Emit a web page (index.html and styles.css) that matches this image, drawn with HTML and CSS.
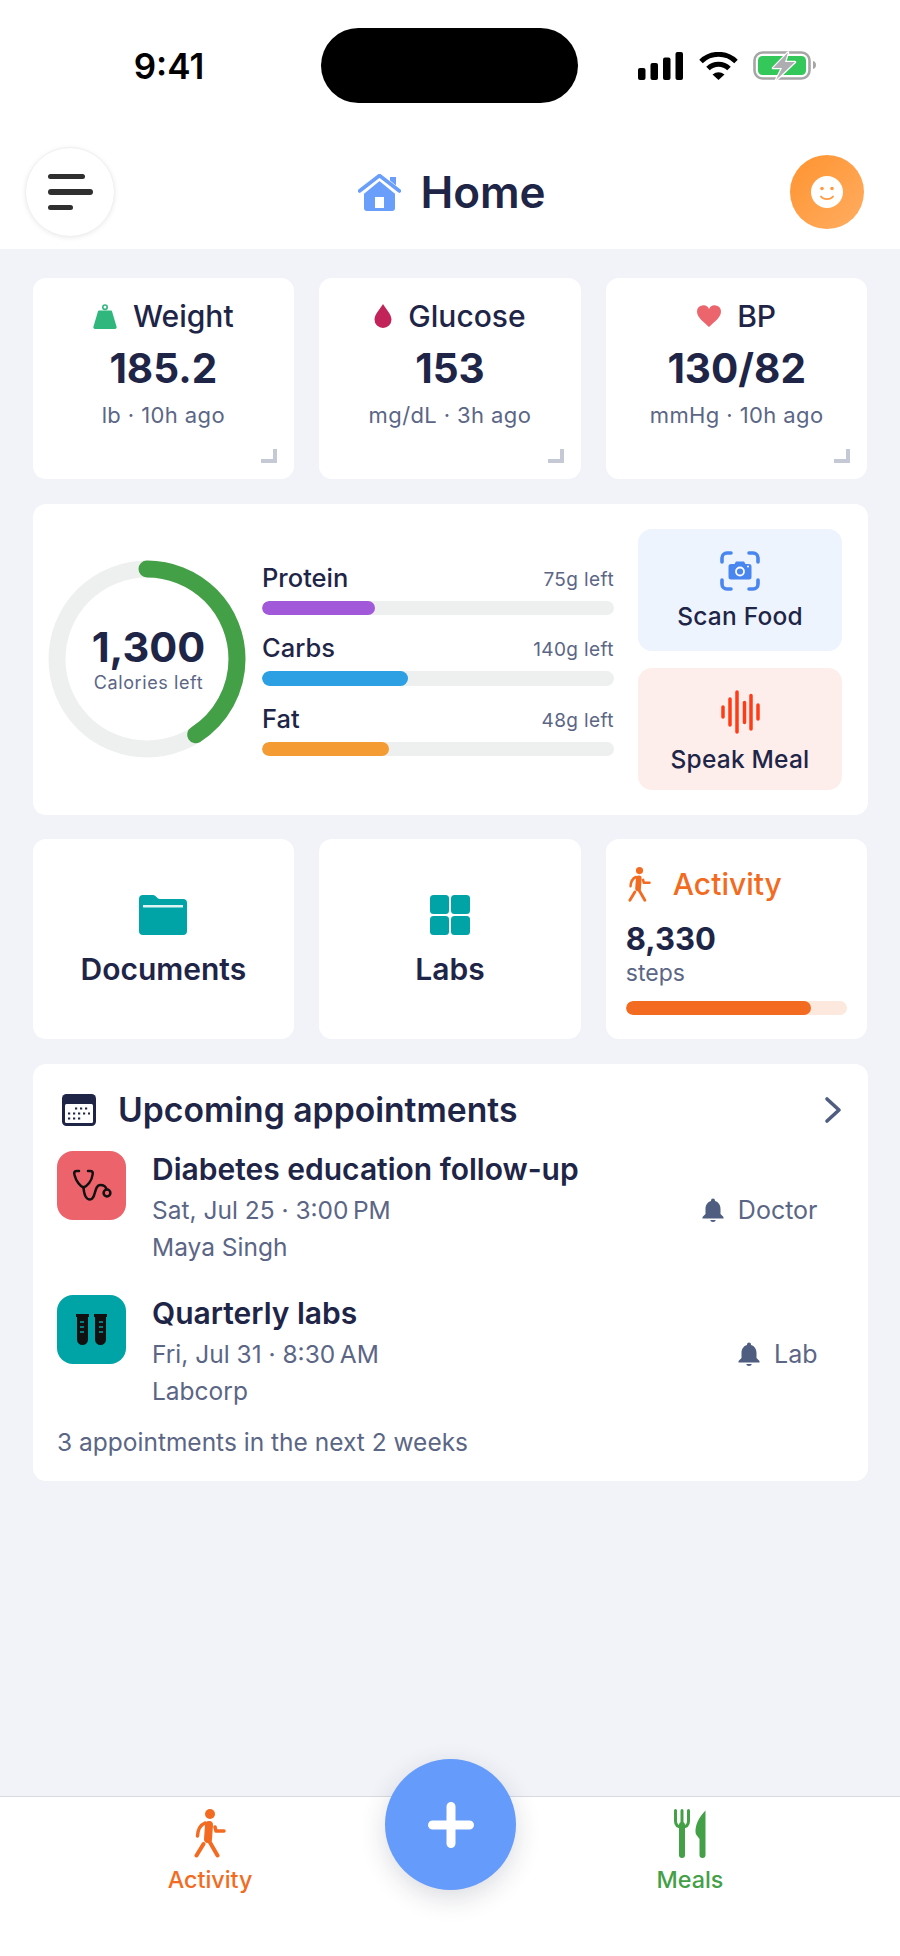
FILE: index.html
```html
<!DOCTYPE html>
<html lang="en">
<head>
    <meta charset="UTF-8">
    <meta name="viewport" content="width=device-width, initial-scale=1.0">
    <title>Home</title>
    <link rel="stylesheet" href="styles.css">
</head>
<body>
<div class="page">
    <div class="top">
        <div class="status">
            <span class="time">9:41</span>
            <div class="island"></div>
            <div class="status-icons">
                <svg class="signal" width="46" height="28" viewBox="0 0 46 28">
                    <rect x="0" y="16" width="7.5" height="12" rx="2"/>
                    <rect x="12.5" y="11" width="7.5" height="17" rx="2"/>
                    <rect x="25" y="5.5" width="7.5" height="22.5" rx="2"/>
                    <rect x="37.5" y="0" width="7.5" height="28" rx="2"/>
                </svg>
                <svg class="wifi" width="39" height="28" viewBox="0 0 39 28">
                    <path d="M2 9.5A25 25 0 0 1 37 9.5M9 16.5A15 15 0 0 1 30 16.5" fill="none" stroke="#000" stroke-width="5"/>
                    <path d="M13.5 22.5Q19.5 18 25.5 22.5L19.5 28Z"/>
                </svg>
                <svg class="battery" width="64" height="30" viewBox="0 0 64 30">
                    <rect x="1.5" y="1.5" width="55" height="26" rx="8" fill="none" stroke="#a6a6a6" stroke-width="2.6"/>
                    <rect x="5" y="5" width="48" height="19" rx="4.5" fill="#34c759"/>
                    <path d="M60 10c2 .5 3 2 3 4s-1 3.500-3 4z" fill="#a6a6a6"/>
                    <path d="M35 1.500L20 17H29L23 29L42 11H32Z" fill="#aeaeb2" stroke="#fff" stroke-width="2.500" stroke-linejoin="round" paint-order="stroke"/>
                </svg>
            </div>
        </div>
        <div class="topbar">
            <button class="menu-btn">
                <span class="line line-a"></span>
                <span class="line line-b"></span>
                <span class="line line-c"></span>
            </button>
            <h1 class="page-title">
                <svg width="43" height="37" viewBox="0 0 43 37">
                    <path d="M6 13.500L21.500 2 37 13.500V34a3 3 0 0 1-3 3H9a3 3 0 0 1-3-3Z" fill="#6a9efb"/>
                    <rect x="32" y="3" width="6" height="11" fill="#6a9efb"/>
                    <path d="M2 18.500L21.500 2.500 41 18.500" fill="none" stroke="#fff" stroke-width="7"/>
                    <path d="M1.500 17L21.500 1.500 41.500 17" fill="none" stroke="#6a9efb" stroke-width="3.600" stroke-linecap="round"/>
                    <rect x="17" y="23" width="9" height="11" fill="#fff"/>
                </svg>
                Home
            </h1>
            <div class="avatar">
                <svg width="32" height="32" viewBox="0 0 32 32">
                    <circle cx="16" cy="16" r="16" fill="#fff"/>
                    <circle cx="11" cy="12.500" r="1.800" fill="#ff9a3f"/>
                    <circle cx="21" cy="12.500" r="1.800" fill="#ff9a3f"/>
                    <path d="M10 20.500C12.500 24 19.500 24 22 20.500" fill="none" stroke="#ff9a3f" stroke-width="1.800" stroke-linecap="round"/>
                </svg>
            </div>
        </div>
    </div>

    <main class="content">
        <section class="row-3 stats">
            <div class="card stat">
                <div class="stat-label">
                    <svg width="24" height="25" viewBox="0 0 24 25">
                        <circle cx="12" cy="3.200" r="2.200" fill="none" stroke="#2fb77e" stroke-width="1.600"/>
                        <path d="M6 6.500H18a1 1 0 0 1 1 .8L23.500 22.500a1.800 1.800 0 0 1-1.700 2.500H2.200a1.800 1.800 0 0 1-1.700-2.500L5 7.300a1 1 0 0 1 1-.8Z" fill="#2fb77e"/>
                    </svg>
                    Weight
                </div>
                <div class="stat-value">185.2</div>
                <div class="stat-sub">lb · 10h ago</div>
                <span class="corner"></span>
            </div>
            <div class="card stat">
                <div class="stat-label">
                    <svg width="18" height="24" viewBox="0 0 18 24">
                        <path d="M9 0C11 4 17.500 10 17.500 15.500A8.500 8.500 0 0 1 .5 15.500C.5 10 7 4 9 0Z" fill="#c2245a"/>
                    </svg>
                    Glucose
                </div>
                <div class="stat-value">153</div>
                <div class="stat-sub">mg/dL · 3h ago</div>
                <span class="corner"></span>
            </div>
            <div class="card stat">
                <div class="stat-label">
                    <svg width="24" height="22" viewBox="0 0 24 22">
                        <path d="M12 22C7 17 0 12.500 0 6.500A6.300 6.300 0 0 1 12 4A6.300 6.300 0 0 1 24 6.500C24 12.500 17 17 12 22Z" fill="#ec646c"/>
                    </svg>
                    BP
                </div>
                <div class="stat-value">130/82</div>
                <div class="stat-sub">mmHg · 10h ago</div>
                <span class="corner"></span>
            </div>
        </section>

        <section class="card macros">
            <div class="ring">
                <svg width="198" height="198" viewBox="0 0 198 198">
                    <circle cx="99" cy="99" r="90" fill="none" stroke="#eef0f0" stroke-width="17"/>
                    <circle cx="99" cy="99" r="90" fill="none" stroke="#43a047" stroke-width="17" stroke-linecap="round" stroke-dasharray="231 565" transform="rotate(-90 99 99)"/>
                </svg>
                <div class="ring-text">
                    <div class="ring-value">1,300</div>
                    <div class="ring-sub">Calories left</div>
                </div>
            </div>
            <div class="macro-list">
                <div class="macro">
                    <div class="macro-head"><span class="macro-name">Protein</span><span class="macro-left">75g left</span></div>
                    <div class="bar"><div class="bar-fill fill-protein" style="width: 32%"></div></div>
                </div>
                <div class="macro">
                    <div class="macro-head"><span class="macro-name">Carbs</span><span class="macro-left">140g left</span></div>
                    <div class="bar"><div class="bar-fill fill-carbs" style="width: 41.500%"></div></div>
                </div>
                <div class="macro">
                    <div class="macro-head"><span class="macro-name">Fat</span><span class="macro-left">48g left</span></div>
                    <div class="bar"><div class="bar-fill fill-fat" style="width: 36%"></div></div>
                </div>
            </div>
            <div class="actions">
                <div class="action action-scan">
                    <svg width="40" height="40" viewBox="0 0 40 40">
                        <path d="M2 11V7a5 5 0 0 1 5-5H11M29 2H33a5 5 0 0 1 5 5V11M38 29V33a5 5 0 0 1-5 5H29M11 38H7a5 5 0 0 1-5-5V29" fill="none" stroke="#4a86f0" stroke-width="3.600" stroke-linecap="round"/>
                        <path d="M11 13H14.500L16 10.500H24L25.500 13H29a2.500 2.500 0 0 1 2.500 2.500V26a2.500 2.500 0 0 1-2.500 2.500H11A2.500 2.500 0 0 1 8.500 26V15.500A2.500 2.500 0 0 1 11 13Z" fill="#4a86f0"/>
                        <circle cx="20" cy="20.500" r="4" fill="none" stroke="#fff" stroke-width="1.800"/>
                        <circle cx="28" cy="15.500" r="1" fill="#fff"/>
                    </svg>
                    <span>Scan Food</span>
                </div>
                <div class="action action-speak">
                    <svg width="40" height="44" viewBox="0 0 40 44" stroke="#ff3c17" stroke-width="3.500" stroke-linecap="round">
                        <path d="M3 17V27M10 9V35M17 2V42M24.500 12.500V32.500M31 5.500V39M38 15V29"/>
                    </svg>
                    <span>Speak Meal</span>
                </div>
            </div>
        </section>

        <section class="row-3 links">
            <div class="card link">
                <svg width="48" height="40" viewBox="0 0 48 40">
                    <path d="M4 0H14C17 0 18 4 21 4H44a4 4 0 0 1 4 4V36a4 4 0 0 1-4 4H4a4 4 0 0 1-4-4V4a4 4 0 0 1 4-4Z" fill="#00a3a6"/>
                    <rect x="4" y="10" width="40" height="2.500" fill="#dff3f3"/>
                </svg>
                <span>Documents</span>
            </div>
            <div class="card link">
                <svg width="40" height="40" viewBox="0 0 40 40" fill="#00a3a6">
                    <rect width="19" height="19" rx="3.500"/>
                    <rect x="21" width="19" height="19" rx="3.500"/>
                    <rect y="21" width="19" height="19" rx="3.500"/>
                    <rect x="21" y="21" width="19" height="19" rx="3.500"/>
                </svg>
                <span>Labs</span>
            </div>
            <div class="card activity">
                <div class="activity-head">
                    <svg width="23" height="35" viewBox="0 0 32 49">
                        <circle cx="16" cy="5" r="5" fill="#f26b21"/>
                        <path d="M15 16L14 30" stroke="#f26b21" stroke-width="8" stroke-linecap="round"/>
                        <path d="M11 14Q4 17 3.500 27M21 18L22 22H30" fill="none" stroke="#f26b21" stroke-width="3.500" stroke-linecap="round" stroke-linejoin="round"/>
                        <path d="M14 30L23.500 46.500M9.500 35L2.500 46.500" fill="none" stroke="#f26b21" stroke-width="4" stroke-linecap="round"/>
                    </svg>
                    Activity
                </div>
                <div class="activity-value">8,330</div>
                <div class="activity-sub">steps</div>
                <div class="activity-bar"><div class="activity-fill" style="width: 83.500%"></div></div>
            </div>
        </section>

        <section class="card appts">
            <div class="appts-head">
                <svg width="34" height="32" viewBox="0 0 34 32">
                    <rect width="34" height="32" rx="4.500" fill="#1e2547"/>
                    <rect x="3" y="10" width="28" height="19" rx="1.500" fill="#fff"/>
                    <path d="M13 14.500H28M6 19.500H28M6 24.500H21" stroke="#1e2547" stroke-width="2.200" stroke-dasharray="2.200 2.800"/>
                </svg>
                <h2>Upcoming appointments</h2>
                <svg class="chevron" width="18" height="28" viewBox="0 0 18 28">
                    <path d="M3 3L15 14L3 25" fill="none" stroke="#4f5d80" stroke-width="3.600" stroke-linecap="round" stroke-linejoin="round"/>
                </svg>
            </div>
            <div class="appt">
                <div class="tile tile-doctor">
                    <svg width="40" height="33" viewBox="-1 0 40 33">
                        <path d="M6 2H3.500C1 2 1 4 1.500 6C3 12 7 17 10.500 18.500C14 17 19 12 19.500 6C20 4 20 2 17.500 2H15" fill="none" stroke="#111" stroke-width="2.500" stroke-linecap="round" stroke-linejoin="round"/>
                        <path d="M10.500 18.500C11 25 13 30.500 17 30.500C23 30.500 21 16 27 16C31 16 33 17 33.500 20.500" fill="none" stroke="#111" stroke-width="2.500"/>
                        <circle cx="34" cy="24" r="3.400" fill="none" stroke="#111" stroke-width="2.500"/>
                    </svg>
                </div>
                <div class="appt-body">
                    <div class="appt-title">Diabetes education follow-up</div>
                    <div class="appt-line">Sat, Jul 25 · 3:00&#8201;PM</div>
                    <div class="appt-line">Maya Singh</div>
                </div>
                <div class="appt-tag">
                    <svg width="24" height="24" viewBox="0 0 24 24"><path d="M12 24c1.500 0 2.700-1 2.700-2h-5.400c0 1 1.200 2 2.700 2zm7.500-8V11c0-4-2-7-5.500-8V2.500a2 2 0 0 0-4 0V3C6.500 4 4.500 7 4.500 11v5L1.500 19v1.500h21V19z" fill="#4f5d80"/></svg>
                    Doctor
                </div>
            </div>
            <div class="appt">
                <div class="tile tile-lab">
                    <svg width="31" height="31" viewBox="0 0 31 31">
                        <path d="M0 0H13V3H12V25.500a5.500 5.500 0 0 1-11 0V3H0Z" fill="#111"/>
                        <path d="M18 0H31V3H30V25.500a5.500 5.500 0 0 1-11 0V3H18Z" fill="#111"/>
                        <path d="M4 8H8M4 13H8M4 18H8M23 8H27M23 13H27M23 18H27" stroke="#00a3a6" stroke-width="1.500"/>
                    </svg>
                </div>
                <div class="appt-body">
                    <div class="appt-title">Quarterly labs</div>
                    <div class="appt-line">Fri, Jul 31 · 8:30&#8201;AM</div>
                    <div class="appt-line">Labcorp</div>
                </div>
                <div class="appt-tag">
                    <svg width="24" height="24" viewBox="0 0 24 24"><path d="M12 24c1.500 0 2.700-1 2.700-2h-5.400c0 1 1.200 2 2.700 2zm7.500-8V11c0-4-2-7-5.500-8V2.500a2 2 0 0 0-4 0V3C6.500 4 4.500 7 4.500 11v5L1.500 19v1.500h21V19z" fill="#4f5d80"/></svg>
                    Lab
                </div>
            </div>
            <div class="appts-foot">3 appointments in the next 2 weeks</div>
        </section>
    </main>

    <nav class="bottom-nav">
        <div class="nav-item nav-activity">
            <svg width="32" height="49" viewBox="0 0 32 49">
                <circle cx="16" cy="5" r="5" fill="#f26b21"/>
                <path d="M15 16L14 30" stroke="#f26b21" stroke-width="8" stroke-linecap="round"/>
                <path d="M11 14Q4 17 3.500 27M21 18L22 22H30" fill="none" stroke="#f26b21" stroke-width="3.500" stroke-linecap="round" stroke-linejoin="round"/>
                <path d="M14 30L23.500 46.500M9.500 35L2.500 46.500" fill="none" stroke="#f26b21" stroke-width="4" stroke-linecap="round"/>
            </svg>
            <span>Activity</span>
        </div>
        <div class="nav-item nav-meals">
            <svg width="32" height="49" viewBox="0 0 32 49">
                <path d="M1.500 1.500V12C1.500 16 4 18 8 18S14.500 16 14.500 12V1.500M8 1.500V18" fill="none" stroke="#43a047" stroke-width="3" stroke-linecap="round"/>
                <path d="M8 16V46" stroke="#43a047" stroke-width="6" stroke-linecap="round"/>
                <path d="M31.500 1.500V46a3 3 0 0 1-6 0V30L22.500 26C20.500 23 21 12 31.500 1.500Z" fill="#43a047"/>
            </svg>
            <span>Meals</span>
        </div>
        <button class="fab">
            <svg width="46" height="46" viewBox="0 0 46 46">
                <path d="M23 4.500V41.500M4.500 23H41.500" stroke="#fff" stroke-width="9" stroke-linecap="round"/>
            </svg>
        </button>
    </nav>
</div>
</body>
</html>
```

FILE: styles.css
```css
* {
    box-sizing: border-box;
}
body {
    margin: 0;
    font-family: Inter, "Liberation Sans", sans-serif;
    color: #1e2547;
    background: #f1f3f8;
}
svg {
    display: block;
    flex-shrink: 0;
}
.page {
    width: 900px;
    height: 1956px;
    display: flex;
    flex-direction: column;
    overflow: hidden;
}

/* top area */
.top {
    background: #fff;
    height: 249px;
}
.status {
    display: grid;
    grid-template-columns: 321px 257px 1fr;
    align-items: center;
    padding-top: 28px;
    height: 103px;
}
.time {
    font-size: 35px;
    font-weight: 600;
    color: #000;
    text-align: center;
    padding-left: 17px;
}
.island {
    height: 75px;
    background: #000;
    border-radius: 38px;
}
.status-icons {
    display: flex;
    align-items: center;
    padding-left: 60px;
}
.wifi {
    margin-left: 15px;
}
.battery {
    margin-left: 15px;
}
.topbar {
    display: grid;
    grid-template-columns: 1fr auto 1fr;
    align-items: center;
    padding: 44px 19px 0 25px;
}
.menu-btn {
    width: 90px;
    height: 90px;
    padding: 0 0 0 22px;
    border: 1px solid #f0f0f0;
    border-radius: 50%;
    background: #fff;
    box-shadow: 0 1px 5px rgba(0, 0, 0, 0.08);
    display: flex;
    flex-direction: column;
    justify-content: center;
    gap: 10px;
}
.line {
    display: block;
    height: 5.500px;
    background: #2f2f2f;
    border-radius: 3px;
}
.line-a {
    width: 37px;
}
.line-b {
    width: 45px;
}
.line-c {
    width: 25px;
}
.page-title {
    margin: 0 2px 0 0;
    display: flex;
    align-items: center;
    gap: 19px;
    font-size: 44px;
    line-height: 54px;
    font-weight: 600;
}
.avatar {
    justify-self: end;
    margin-right: 17px;
    width: 74px;
    height: 74px;
    border-radius: 50%;
    background: linear-gradient(135deg, #ff932f, #ffad62);
    display: flex;
    align-items: center;
    justify-content: center;
}

/* content */
.content {
    flex: 1;
    padding: 29px 32.500px 0;
    display: flex;
    flex-direction: column;
    gap: 24.500px;
}
.card {
    background: #fff;
    border-radius: 13px;
}
.row-3 {
    display: grid;
    grid-template-columns: repeat(3, 1fr);
    gap: 25px;
}
.stat {
    position: relative;
    height: 201px;
    padding-top: 20px;
    text-align: center;
}
.stat-label {
    display: flex;
    align-items: center;
    justify-content: center;
    gap: 16px;
    height: 36px;
    font-size: 30px;
    font-weight: 500;
}
.stat-value {
    margin-top: 11px;
    font-size: 40.500px;
    line-height: 48px;
    font-weight: 700;
}
.stat-sub {
    margin-top: 7px;
    font-size: 22px;
    letter-spacing: 0.4px;
    line-height: 30px;
    color: #5b6685;
}
.corner {
    position: absolute;
    right: 17px;
    bottom: 16px;
    width: 16px;
    height: 14px;
    border-right: 4px solid #c5c9d6;
    border-bottom: 4px solid #c5c9d6;
}

/* macros */
.macros {
    height: 311px;
    display: flex;
    align-items: center;
    padding: 0 25px 0 15.500px;
}
.ring {
    position: relative;
    width: 198px;
    height: 198px;
    flex-shrink: 0;
}
.ring-text {
    position: absolute;
    inset: 0;
    padding-left: 3px;
    display: flex;
    flex-direction: column;
    align-items: center;
    justify-content: center;
}
.ring-value {
    font-size: 41.500px;
    line-height: 48px;
    font-weight: 700;
}
.ring-sub {
    font-size: 18px;
    line-height: 24px;
    letter-spacing: 0.6px;
    color: #5b6685;
}
.macro-list {
    width: 352px;
    margin: -3px 0 0 16px;
    display: flex;
    flex-direction: column;
    gap: 14px;
}
.macro-head {
    display: flex;
    justify-content: space-between;
    align-items: flex-end;
    height: 42px;
    padding-bottom: 8px;
}
.macro-name {
    font-size: 25.500px;
    line-height: 30px;
    font-weight: 500;
}
.macro-left {
    font-size: 19px;
    line-height: 26px;
    letter-spacing: 0.4px;
    color: #5b6685;
}
.bar {
    height: 14.500px;
    background: #eef0f0;
    border-radius: 8px;
    overflow: hidden;
}
.bar-fill {
    height: 100%;
    border-radius: 8px;
}
.fill-protein {
    background: #a259d9;
}
.fill-carbs {
    background: #2d9fe3;
}
.fill-fat {
    background: #f59b34;
}
.actions {
    width: 204px;
    margin-left: 24px;
    display: flex;
    flex-direction: column;
    gap: 17px;
}
.action {
    height: 122px;
    border-radius: 14px;
    display: flex;
    flex-direction: column;
    align-items: center;
    padding-top: 22px;
    font-size: 24.500px;
    font-weight: 500;
    letter-spacing: 0.2px;
}
.action span {
    margin-top: 9px;
    line-height: 32px;
}
.action-scan {
    background: #edf4fe;
}
.action-speak {
    background: #fdeeeb;
}

/* links row */
.links {
    height: 200px;
}
.link {
    display: flex;
    flex-direction: column;
    align-items: center;
    padding-top: 56px;
    font-size: 30px;
    font-weight: 600;
}
.link span {
    margin-top: 16px;
    line-height: 36px;
}
.activity {
    padding: 27px 20px 0;
}
.activity-head {
    display: flex;
    align-items: center;
    gap: 22px;
    height: 36px;
    margin-left: 2px;
    font-size: 30px;
    font-weight: 500;
    color: #f26b21;
}
.activity-value {
    margin-top: 18px;
    font-size: 31px;
    line-height: 38px;
    font-weight: 700;
}
.activity-sub {
    font-size: 23px;
    line-height: 28px;
    color: #5b6685;
    margin-top: 1px;
}
.activity-bar {
    margin-top: 14px;
    height: 14px;
    background: #fce8dc;
    border-radius: 7px;
    overflow: hidden;
}
.activity-fill {
    height: 100%;
    background: #f26b21;
    border-radius: 7px;
}

/* appointments */
.appts {
    height: 417px;
    padding: 30px 26px 0 24.500px;
}
.appts-head {
    display: flex;
    align-items: center;
    padding-left: 5px;
    gap: 22px;
}
.appts-head h2 {
    margin: 0;
    flex: 1;
    font-size: 33.700px;
    line-height: 32px;
    font-weight: 600;
}
.appt {
    display: flex;
    margin-top: 25px;
    padding-right: 24px;
}
.appt + .appt {
    margin-top: 29px;
}
.tile {
    width: 69px;
    height: 69px;
    border-radius: 16px;
    display: flex;
    align-items: center;
    justify-content: center;
}
.tile-doctor {
    background: #ec636c;
}
.tile-lab {
    background: #00a3a6;
}
.appt-body {
    flex: 1;
    margin-left: 26px;
}
.appt-title {
    font-size: 30px;
    line-height: 36px;
    font-weight: 600;
    margin-bottom: 5px;
}
.appt-line {
    font-size: 24.500px;
    line-height: 37px;
    color: #5b6685;
}
.appt-tag {
    display: flex;
    align-items: center;
    gap: 13px;
    align-self: flex-start;
    margin-top: 40px;
    font-size: 25px;
    line-height: 38px;
    color: #5b6685;
}
.appts-foot {
    margin-top: 17px;
    font-size: 24.500px;
    line-height: 30px;
    color: #5b6685;
}

/* bottom nav */
.bottom-nav {
    position: relative;
    height: 160px;
    background: #fff;
    border-top: 1px solid #d8dadf;
    display: grid;
    grid-template-columns: 420px 1fr;
}
.nav-item {
    display: flex;
    flex-direction: column;
    align-items: center;
    padding-top: 12px;
    font-size: 23.300px;
    font-weight: 500;
}
.nav-item span {
    margin-top: 8px;
    line-height: 28px;
}
.nav-activity {
    color: #f26b21;
}
.nav-meals {
    color: #43a047;
    width: 540px;
}
.fab {
    position: absolute;
    left: 385px;
    top: -38px;
    width: 131px;
    height: 131px;
    padding: 0;
    border: none;
    border-radius: 50%;
    background: #659bfa;
    box-shadow: 0 8px 26px rgba(30, 40, 70, 0.16);
    display: flex;
    align-items: center;
    justify-content: center;
}
```
